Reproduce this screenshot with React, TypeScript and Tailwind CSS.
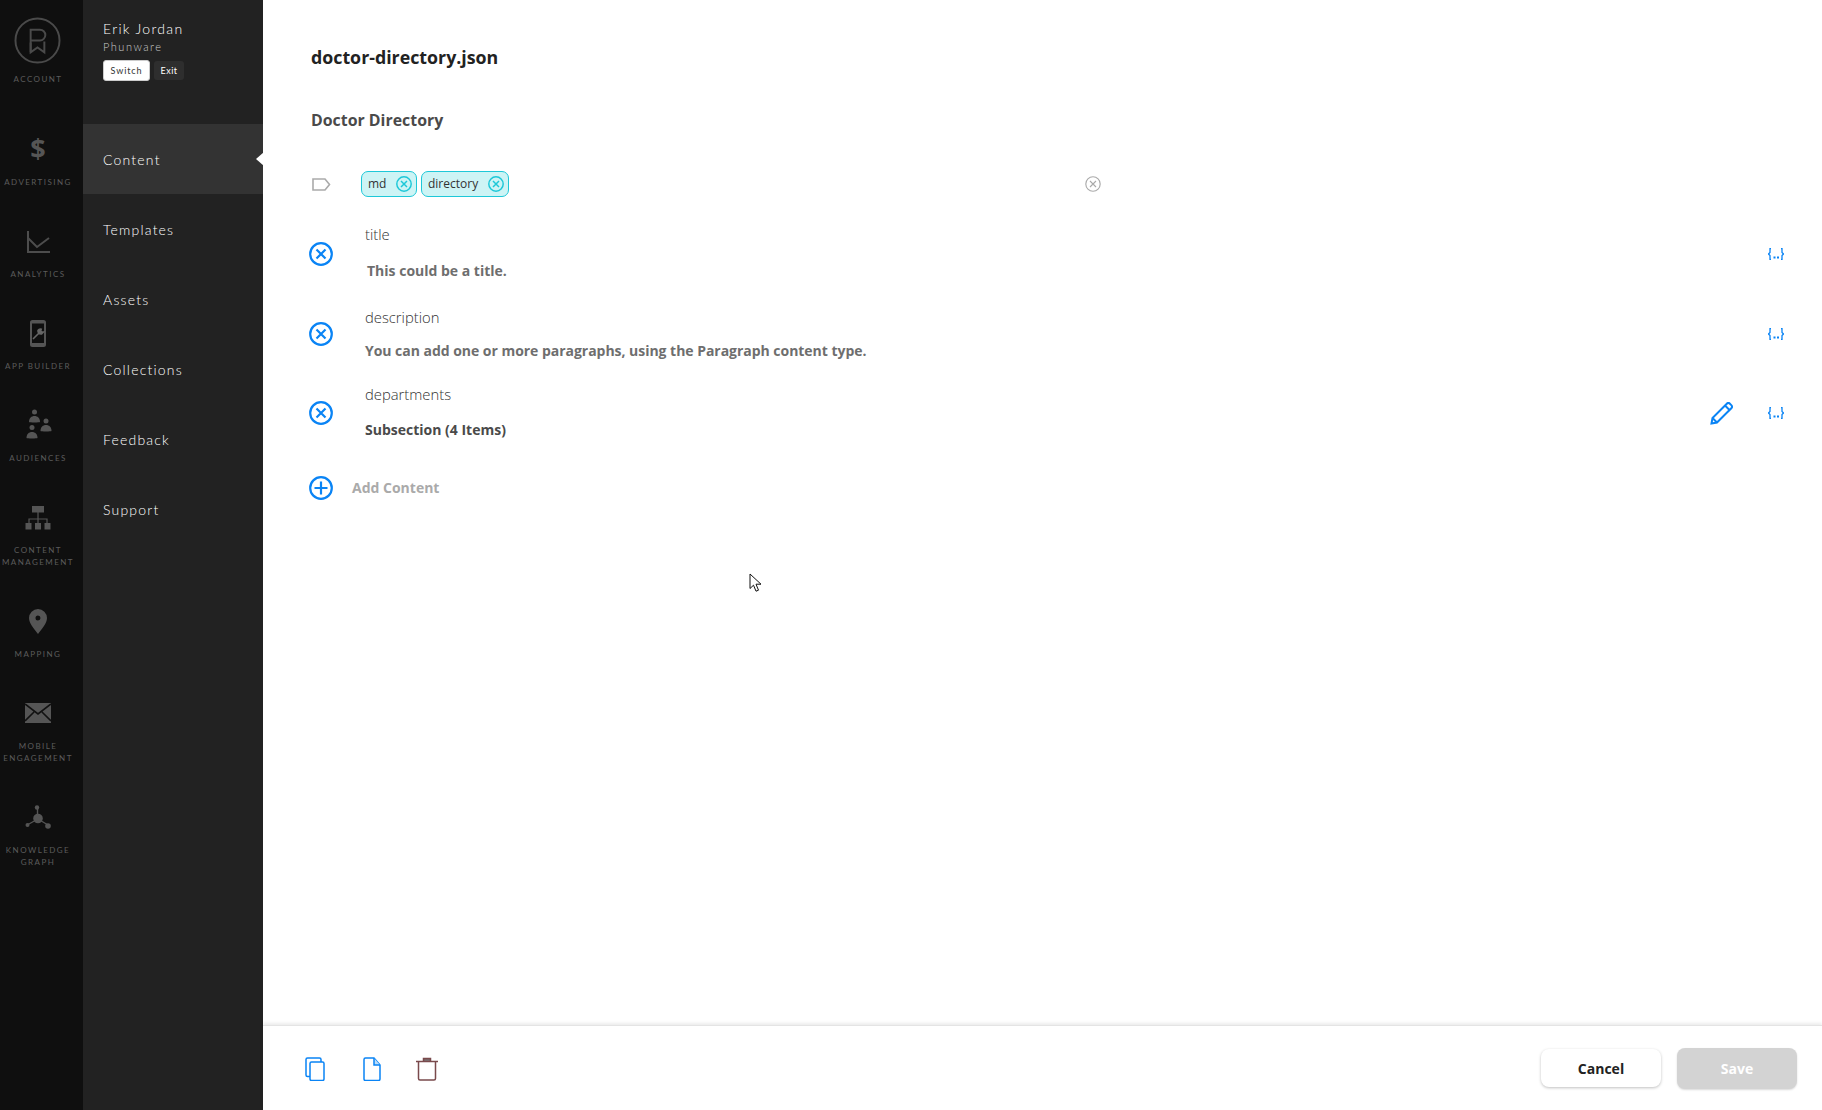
import React from "react";

const railLabel = "text-[8px] leading-[12px] tracking-[1.45px] text-[#5c5c5c] text-center font-['Lato',sans-serif]";

const LogoIcon = () => (
  <svg className="-ml-[1px]" width="47" height="47" viewBox="0 0 48 48" fill="none" stroke="#4a4a4a" strokeWidth="2">
    <circle cx="24" cy="24" r="22.5" />
    <path d="M17 36V13h9.5a5.5 5.5 0 0 1 0 11H17" />
    <path d="M17 26v10l7-5 7 5V25" />
  </svg>
);
const DollarIcon = () => <span className="-mt-[4px] text-[27px] leading-[36px] font-bold text-[#555] font-['Open_Sans',sans-serif]">$</span>;
const ChartIcon = () => (
  <svg width="24" height="24" viewBox="0 0 24 24" fill="none" stroke="#4d4d4d" strokeWidth="2">
    <path d="M2 1v21h23" />
    <path d="M2 8l9 9 12-9" />
  </svg>
);
const PhoneIcon = () => (
  <svg width="16" height="27" viewBox="0 0 16 27">
    <rect x="1" y="1" width="14" height="25" rx="1.5" fill="none" stroke="#555" strokeWidth="2" />
    <rect x="1" y="1" width="14" height="2.5" fill="#555" />
    <rect x="1" y="23" width="14" height="3" fill="#555" />
    <path d="M3 19l6-6M8 10.5a3 3 0 0 0 3.5 3.5l1.8-2-1.6 0-1-1 .5-1.8A3 3 0 0 0 8 10.5z" stroke="#666" strokeWidth="1.6" fill="#666" />
  </svg>
);
const AudienceIcon = () => (
  <svg className="-mt-[3px] ml-[1px]" width="26" height="30" viewBox="0 0 26 30" fill="#555">
    <circle cx="8.5" cy="3" r="2.5" /><path d="M3 13c0-4 2.5-6 5.5-6s5.500 2 5.500 6c0 .6-11 .6-11 0z" />
    <circle cx="20" cy="12" r="2.500" /><path d="M14.500 22c0-4 2.500-6 5.500-6s5.500 2 5.500 6c0 .6-11 .6-11 0z" />
    <circle cx="6" cy="18.500" r="2.500" /><path d="M.5 29c0-4 2.500-6 5.500-6s5.500 2 5.500 6c0 .6-11 .6-11 0z" />
  </svg>
);
const HierarchyIcon = () => (
  <svg width="26" height="24" viewBox="0 0 26 24">
    <path d="M13 6v8M4 17v-4h18v4M13 13v4" stroke="#555" strokeWidth="1.200" fill="none" />
    <rect x="7" y="0" width="12" height="6.500" fill="#555" />
    <rect x="0.500" y="17" width="6" height="6.500" fill="#555" />
    <rect x="10" y="17" width="6" height="6.500" fill="#555" />
    <rect x="19.500" y="17" width="6" height="6.500" fill="#555" />
  </svg>
);
const PinIcon = () => (
  <svg width="18" height="25" viewBox="0 0 18 25">
    <path fillRule="evenodd" fill="#555" d="M9 0a9 9 0 0 1 9 9c0 5-5 11-9 16C5 20 0 14 0 9a9 9 0 0 1 9-9zm0 6.500a2.500 2.500 0 1 0 0 5 2.500 2.500 0 0 0 0-5z" />
  </svg>
);
const MailIcon = () => (
  <svg className="-mt-[1px]" width="26" height="20" viewBox="0 0 26 20">
    <rect x="0" y="0" width="26" height="20" fill="#555" />
    <path d="M0 1l13 10L26 1M0 18l9-9M26 18l-9-9" stroke="#111" strokeWidth="1.600" fill="none" />
  </svg>
);
const GraphIcon = () => (
  <svg className="mt-[1px]" width="26" height="26" viewBox="0 0 26 26" fill="#555">
    <path d="M12.500 12V3M13 14l-10 5.500M13 14l10 6" stroke="#555" strokeWidth="1.400" />
    <circle cx="12" cy="2.500" r="2.200" /><circle cx="13" cy="13.500" r="4.800" />
    <circle cx="2.500" cy="20" r="2" /><circle cx="23" cy="21" r="2.800" />
  </svg>
);

const XCircle = ({ size = 24, color = "#0a84f5", sw = 2.2 }: { size?: number; color?: string; sw?: number }) => (
  <svg width={size} height={size} viewBox="0 0 24 24" fill="none" stroke={color} strokeWidth={sw}>
    <circle cx="12" cy="12" r="10.800" />
    <path d="M7.500 7.500l9 9M16.500 7.500l-9 9" />
  </svg>
);
const PlusCircle = () => (
  <svg className="mt-[1px]" width="24" height="24" viewBox="0 0 24 24" fill="none" stroke="#0a84f5" strokeWidth="2.200">
    <circle cx="12" cy="12" r="10.800" />
    <path d="M12 5.500v13M5.500 12h13" />
  </svg>
);
const Braces = () => (
  <svg width="16" height="12" viewBox="0 0 16 12" fill="none" stroke="#0a84f5" strokeWidth="1.300">
    <path d="M3 .5H2v4L.5 6 2 7.500v4h1M13 .5h1v4L15.500 6 14 7.500v4h-1" />
    <path d="M5.500 9.500h2M9 9.500h2" strokeWidth="1.800" />
  </svg>
);
const Pencil = () => (
  <svg width="23" height="23" viewBox="0 0 23 23" fill="none" stroke="#0a84f5" strokeWidth="2">
    <path d="M1.500 21.500l1-5.500L16.800 1.700a2.200 2.200 0 0 1 3.100 0l1.400 1.400a2.200 2.200 0 0 1 0 3.100L7 20.500z" />
    <path d="M2.500 16l4.500 4.500M15 3.500l4.500 4.500" />
  </svg>
);

const railItems: { icon: React.ReactNode; lines: string[] }[] = [
  { icon: <DollarIcon />, lines: ["ADVERTISING"] },
  { icon: <ChartIcon />, lines: ["ANALYTICS"] },
  { icon: <PhoneIcon />, lines: ["APP BUILDER"] },
  { icon: <AudienceIcon />, lines: ["AUDIENCES"] },
  { icon: <HierarchyIcon />, lines: ["CONTENT", "MANAGEMENT"] },
  { icon: <PinIcon />, lines: ["MAPPING"] },
  { icon: <MailIcon />, lines: ["MOBILE", "ENGAGEMENT"] },
  { icon: <GraphIcon />, lines: ["KNOWLEDGE", "GRAPH"] },
];

const navItems = ["Content", "Templates", "Assets", "Collections", "Feedback", "Support"];

const Chip = ({ label, w }: { label: string; w: string }) => (
  <div className={`${w} h-[26px] flex items-center justify-between pl-[6px] pr-[4px] rounded-[7px] border border-[#1ec8d8] bg-[#cdf4f5] text-[12px] text-[#333]`}>
    <span>{label}</span>
    <XCircle size={16} color="#1ec8d8" sw={2.2} />
  </div>
);

const FieldRow = ({ h, label, value, valueClass, edit, iconMt, valueMt }: { h: string; label: string; value: string; valueClass: string; edit?: boolean; iconMt: string; valueMt: string }) => (
  <div className={`${h} flex`}>
    <div className={`w-[56px] -ml-[2px] shrink-0 ${iconMt}`}><XCircle /></div>
    <div className="flex-1 min-w-0">
      <div className="text-[14.8px] leading-[18px] font-light text-[#333]">{label}</div>
      <div className={`${valueMt} text-[14px] leading-[20px] font-bold ${valueClass}`}>{value}</div>
    </div>
    <div className={`flex items-center h-[24px] pr-[38px] ${iconMt}`}>
      {edit && <div className="mr-[35px]"><Pencil /></div>}
      <Braces />
    </div>
  </div>
);

export default function App() {
  return (
    <div className="relative flex h-[1110px] w-[1822px] overflow-hidden bg-white font-['Open_Sans',sans-serif]">
      {/* icon rail */}
      <aside className="w-[83px] shrink-0 bg-[#0f0f0f] pr-[7px]">
        <div className="h-[96px] pt-[17px] flex flex-col items-center">
          <LogoIcon />
          <div className={`${railLabel} mt-[9px]`}>ACCOUNT</div>
        </div>
        {railItems.map((it) => (
          <div key={it.lines[0]}>
            <div className="h-[80px] pt-[36px] pb-[9px] flex items-center justify-center">{it.icon}</div>
            {it.lines.map((l) => (
              <div key={l} className={railLabel}>{l}</div>
            ))}
          </div>
        ))}
      </aside>

      {/* nav */}
      <nav className="w-[180px] shrink-0 bg-[#222222] font-['Lato',sans-serif] font-light text-white">
        <div className="h-[124px] pl-[20px] pt-[20px]">
          <div className="text-[14px] leading-[18px] tracking-[1.3px]">Erik Jordan</div>
          <div className="text-[11px] leading-[18px] tracking-[1.5px] text-[#ccc]">Phunware</div>
          <div className="mt-[4px] flex items-center gap-[4px]">
            <div className="w-[47px] h-[21px] flex items-center justify-center rounded-[3px] bg-white text-[#333] text-[9px] font-normal tracking-[0.9px] border border-[#ccc]">Switch</div>
            <div className="w-[30px] h-[19px] flex items-center justify-center rounded-[3px] bg-[#2e2e2e] text-white text-[9px] font-normal tracking-[0.5px]">Exit</div>
          </div>
        </div>
        {navItems.map((n, i) => (
          <div key={n} className={`relative h-[70px] flex items-center pl-[20px] text-[14px] tracking-[1.2px] ${i === 0 ? "bg-[#333333]" : ""}`}>
            {n}
            {i === 0 && (
              <div className="absolute right-[-1px] top-[28px] w-0 h-0 border-y-[7px] border-y-transparent border-r-[8px] border-r-white" />
            )}
          </div>
        ))}
      </nav>

      {/* main */}
      <main className="flex-1 min-w-0 flex flex-col">
        <div className="flex-1 pl-[48px]">
          <h1 className="pt-[45px] text-[17.8px] leading-[24px] font-bold text-[#222]">doctor-directory.json</h1>
          <h2 className="mt-[39px] text-[15.9px] leading-[24px] font-bold text-[#4a4a4a]">Doctor Directory</h2>
          <div className="mt-[39px] mb-[28px] h-[26px] flex items-center">
            <svg width="19" height="13" viewBox="0 0 19 13" fill="none" stroke="#aaa" strokeWidth="1.600" className="ml-[1px]">
              <path d="M1 1h12l4.500 5.500L13 12H1z" />
            </svg>
            <div className="ml-[30px] flex gap-[4px] w-[724px]">
              <Chip label="md" w="w-[56px]" />
              <Chip label="directory" w="w-[88px]" />
            </div>
            <XCircle size={16} color="#aaa" sw={1.700} />
          </div>
          <FieldRow h="h-[83px]" label="title" value="This could be a title." valueClass="text-[#6e6e6e] pl-[2px]" iconMt="mt-[17px]" valueMt="mt-[18px]" />
          <FieldRow h="h-[77px]" label="description" value="You can add one or more paragraphs, using the Paragraph content type." valueClass="text-[#6e6e6e] tracking-[-0.03px]" iconMt="mt-[14px]" valueMt="mt-[15px]" />
          <FieldRow h="h-[90px]" label="departments" value="Subsection (4 Items)" valueClass="text-[#4a4a4a]" iconMt="mt-[16px]" valueMt="mt-[17px]" edit />
          <div className="flex items-center">
            <div className="w-[43px] -ml-[2px]"><PlusCircle /></div>
            <span className="text-[14px] font-bold text-[#aaa]">Add Content</span>
          </div>
        </div>
        <footer className="h-[85px] pt-[2px] shrink-0 border-t border-[#e4e4e4] shadow-[0_-2px_3px_rgba(0,0,0,0.08)] flex items-center pl-[42px] pr-[25px]">
          <div className="flex items-center">
            <svg width="20" height="24" viewBox="0 0 20 24" fill="none" stroke="#0a84f5" strokeWidth="1.500">
              <rect x="1" y="1" width="15" height="18.500" rx="1.500" />
              <rect x="5" y="5" width="14" height="18.500" rx="1.500" fill="#fff" />
            </svg>
            <svg className="ml-[38px]" width="18" height="24" viewBox="0 0 18 24" fill="none" stroke="#0a84f5" strokeWidth="1.500">
              <path d="M2.500 1H11l6 7v14a1.500 1.500 0 0 1-1.500 1.500h-13A1.500 1.500 0 0 1 1 22V2.500A1.500 1.500 0 0 1 2.500 1z" />
              <path d="M11 1v7h6" fill="#bcdcf8" />
            </svg>
            <svg className="ml-[35px]" width="22" height="24" viewBox="0 0 22 24" fill="none" stroke="#7a4a4c" strokeWidth="1.500">
              <path d="M0 4.500h22" />
              <path d="M7.500 4V1.500h7V4" fill="#7a6a6c" />
              <path d="M2.500 5v16.500A1.500 1.500 0 0 0 4 23h14a1.500 1.500 0 0 0 1.500-1.500V5" />
            </svg>
          </div>
          <div className="ml-auto mb-[2px] flex items-center gap-[16px]">
            <button className="w-[120px] h-[38px] rounded-[8px] bg-white shadow-[0_1px_3px_rgba(0,0,0,0.25)] text-[14px] font-bold text-[#222]">Cancel</button>
            <button className="w-[120px] h-[41px] rounded-[8px] bg-[#d3d3d3] shadow-[0_1px_2px_rgba(0,0,0,0.15)] text-[14px] font-bold text-white">Save</button>
          </div>
        </footer>
      </main>

      {/* mouse cursor */}
      <svg className="absolute left-[749px] top-[573px]" width="14" height="20" viewBox="0 0 14 20" fill="#fff" stroke="#111" strokeWidth="1">
        <path d="M1 1v14.500l3.500-3.300 2.500 6 2.500-1-2.500-6H12z" />
      </svg>
    </div>
  );
}
